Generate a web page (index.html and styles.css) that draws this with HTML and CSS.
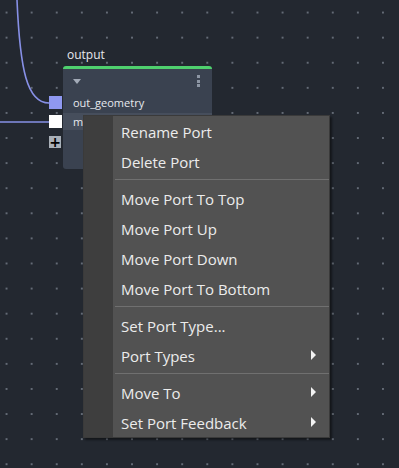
FILE: index.html
```html
<!DOCTYPE html>
<html>
<head>
  <meta charset="utf-8">
  <title>Node graph</title>
  <link rel="stylesheet" href="styles.css">
</head>
<body>
  <div class="canvas">
    <svg class="wires" width="399" height="468">
      <path d="M17 0 C20 70 27 103 49 103" />
      <path d="M0 122 L49 122" />
    </svg>

    <div class="node">
      <div class="node-title">output</div>
      <div class="node-body">
        <div class="node-head">
          <span class="collapse"></span>
          <span class="kebab"><i></i><i></i><i></i></span>
        </div>
        <div class="port-row">
          <span class="port port-blue"></span>
          out_geometry
        </div>
        <div class="port-row active">
          <span class="port port-white"></span>
          m
        </div>
        <div class="add-row">
          <span class="add-port">+</span>
        </div>
      </div>
    </div>

    <div class="menu">
      <div class="item">Rename Port</div>
      <div class="item">Delete Port</div>
      <div class="sep"></div>
      <div class="item">Move Port To Top</div>
      <div class="item">Move Port Up</div>
      <div class="item">Move Port Down</div>
      <div class="item">Move Port To Bottom</div>
      <div class="sep"></div>
      <div class="item">Set Port Type...</div>
      <div class="item sub">Port Types</div>
      <div class="sep"></div>
      <div class="item sub">Move To</div>
      <div class="item sub">Set Port Feedback</div>
    </div>
  </div>
</body>
</html>
```

FILE: styles.css
```css
html, body {
  height: 100%;
  margin: 0;
}
body {
  background-color: #232830;
  font-family: "Open Sans", "Noto Sans", sans-serif;
  overflow: hidden;
}
.canvas {
  position: relative;
  width: 399px;
  height: 468px;
  background-color: #232830;
  background-image: radial-gradient(circle, #646b76 0.7px, transparent 1px);
  background-size: 25.1px 25.1px;
  background-position: -6px 0px;
}
.wires {
  position: absolute;
  left: 0;
  top: 0;
}
.wires path {
  fill: none;
  stroke: #8790e6;
  stroke-width: 1.6;
}

/* node */
.node {
  position: absolute;
  left: 63px;
  top: 47px;
  width: 149px;
}
.node-title {
  color: #e6e9ee;
  font-size: 12px;
  line-height: 16px;
  padding-left: 4px;
  margin-bottom: 3px;
}
.node-body {
  background: #3a4250;
  border-top: 3px solid #4fd06e;
  border-radius: 3px;
  height: 100px;
}
.node-head {
  display: flex;
  justify-content: space-between;
  align-items: center;
  height: 24px;
  padding: 0 12px 0 10px;
}
.collapse {
  width: 0;
  height: 0;
  border-left: 4px solid transparent;
  border-right: 4px solid transparent;
  border-top: 5px solid #a3abb8;
}
.kebab {
  display: flex;
  flex-direction: column;
  gap: 1.5px;
}
.kebab i {
  display: block;
  width: 3px;
  height: 3px;
  background: #8d96a4;
}
.port-row {
  position: relative;
  height: 20px;
  line-height: 20px;
  padding-left: 10px;
  color: #e6e9ee;
  font-size: 11px;
}
.port-row.active {
  background: #464e5c;
  height: 17px;
  line-height: 17px;
}
.port {
  position: absolute;
  left: -14px;
  top: 3px;
  width: 13px;
  height: 13px;
}
.active .port {
  top: 2px;
}
.port-blue {
  background: #8f98f0;
}
.port-white {
  background: #ffffff;
}
.add-row {
  position: relative;
  height: 20px;
}
.add-port {
  position: absolute;
  left: -14px;
  top: 6px;
  width: 12px;
  height: 12px;
  background: #a9b0b8;
  color: #000;
  font-family: "DejaVu Sans", sans-serif;
  font-weight: bold;
  font-size: 14px;
  line-height: 12px;
  text-align: center;
}

/* context menu */
.menu {
  position: absolute;
  left: 83px;
  top: 115px;
  width: 245px;
  border: 1px solid #3a3a3a;
  background: linear-gradient(to right, #3e3e3e 29px, #525252 29px);
  box-shadow: 2px 2px 2px rgba(0, 0, 0, 0.45);
  color: #ececec;
  font-size: 15px;
}
.item {
  position: relative;
  height: 30px;
  line-height: 27px;
  padding-top: 3px;
  padding-left: 37px;
  box-sizing: border-box;
}
.item.sub::after {
  content: "";
  position: absolute;
  right: 13px;
  top: 10px;
  border-top: 5px solid transparent;
  border-bottom: 5px solid transparent;
  border-left: 5px solid #f2f2f2;
}
.sep {
  height: 1px;
  margin: 3px 0 3px 31px;
  background: #707070;
}
```
